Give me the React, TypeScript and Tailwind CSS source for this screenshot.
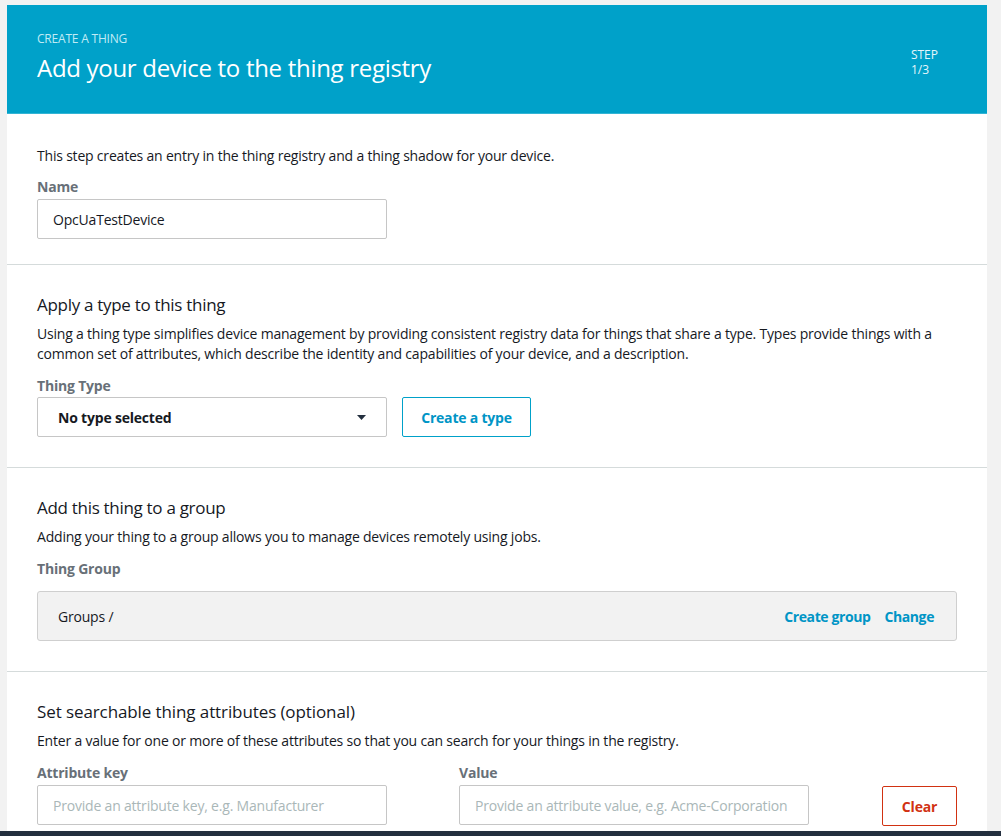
import React from 'react';

const font = { fontFamily: '"Open Sans", "Liberation Sans", sans-serif' };

function Label({ children }: { children: React.ReactNode }) {
  return <div className="text-[14px] leading-[20px] font-bold text-[#687078] tracking-[-0.2px]">{children}</div>;
}

function TextInput({ value, placeholder }: { value?: string; placeholder?: string }) {
  return (
    <div className="w-[350px] h-[40px] border border-[#c6c6c6] rounded-[2px] bg-white flex items-center px-[15px] text-[14px] whitespace-nowrap overflow-hidden tracking-[-0.2px]">
      {value ? (
        <span className="text-[#16191f]">{value}</span>
      ) : (
        <span className="text-[#aab7b8]">{placeholder}</span>
      )}
    </div>
  );
}

export default function App() {
  return (
    <div className="h-[836px] w-full bg-[#f2f2f2] flex flex-col overflow-hidden" style={font}>
      <div className="flex-1 overflow-hidden pt-[5px] pl-[7px] pr-[14px]">
        <div className="bg-white">
          {/* header */}
          <div className="h-[109px] bg-[#00a1c9] border-b border-[#33b4d4] flex justify-between pl-[30px] pr-[49px]">
            <div className="pt-[27px]">
              <div className="text-[12px] leading-[14px] uppercase text-[#c0ebf5] tracking-[-0.2px]">Create a thing</div>
              <div className="text-[24px] leading-[32px] text-white mt-[6px] tracking-[-0.3px]">
                Add your device to the thing registry
              </div>
            </div>
            <div className="pt-[42px] text-[12px] leading-[15px] text-[#e6f6fb]">
              <div>STEP</div>
              <div>1/3</div>
            </div>
          </div>

          {/* name */}
          <div className="px-[30px] pt-[32px] pb-[25px] border-b border-[#d5dbdb] tracking-[-0.2px]">
            <p className="text-[14px] leading-[20px] text-[#16191f]">
              This step creates an entry in the thing registry and a thing shadow for your device.
            </p>
            <div className="mt-[11px]">
              <Label>Name</Label>
            </div>
            <div className="mt-[2px]">
              <TextInput value="OpcUaTestDevice" />
            </div>
          </div>

          {/* type */}
          <div className="px-[30px] pt-[27px] pb-[30px] border-b border-[#d5dbdb] tracking-[-0.2px]">
            <h2 className="text-[17px] leading-[26px] text-[#16191f] tracking-[-0.3px]">Apply a type to this thing</h2>
            <p className="mt-[6px] text-[14px] leading-[20px] text-[#16191f]">
              Using a thing type simplifies device management by providing consistent registry data for things that
              share a type. Types provide things with a common set of attributes, which describe the identity and
              capabilities of your device, and a description.
            </p>
            <div className="mt-[12px]">
              <Label>Thing Type</Label>
            </div>
            <div className="mt-[1px] flex gap-[15px]">
              <div className="w-[350px] h-[40px] border border-[#c6c6c6] rounded-[2px] flex items-center justify-between pl-[20px] pr-[20px]">
                <span className="text-[14px] font-bold text-[#16191f]">No type selected</span>
                <svg width="9" height="5" viewBox="0 0 9 5">
                  <path d="M0 0h9L4.5 5z" fill="#232f3e" />
                </svg>
              </div>
              <button className="h-[40px] w-[129px] border border-[#00a1c9] rounded-[2px] text-[14px] font-bold text-[#0095c6] bg-white tracking-[-0.2px]">
                Create a type
              </button>
            </div>
          </div>

          {/* group */}
          <div className="px-[30px] pt-[27px] pb-[30px] border-b border-[#d5dbdb] tracking-[-0.2px]">
            <h2 className="text-[17px] leading-[26px] text-[#16191f] tracking-[-0.3px]">Add this thing to a group</h2>
            <p className="mt-[6px] text-[14px] leading-[20px] text-[#16191f]">
              Adding your thing to a group allows you to manage devices remotely using jobs.
            </p>
            <div className="mt-[12px]">
              <Label>Thing Group</Label>
            </div>
            <div className="mt-[12px] h-[50px] bg-[#f2f2f2] border border-[#cfcfcf] rounded-[3px] flex items-center justify-between pl-[20px] pr-[22px]">
              <span className="text-[14px] text-[#16191f]">Groups /</span>
              <div className="flex gap-[14px] text-[14px] font-bold text-[#0095c6] tracking-[-0.4px]">
                <span>Create group</span>
                <span>Change</span>
              </div>
            </div>
          </div>

          {/* attributes */}
          <div className="px-[30px] pt-[27px] pb-[30px] tracking-[-0.2px]">
            <h2 className="text-[17px] leading-[26px] text-[#16191f] tracking-[-0.1px]">
              Set searchable thing attributes (optional)
            </h2>
            <p className="mt-[6px] text-[14px] leading-[20px] text-[#16191f]">
              Enter a value for one or more of these attributes so that you can search for your things in the registry.
            </p>
            <div className="mt-[12px] flex items-end">
              <div>
                <Label>Attribute key</Label>
                <div className="mt-[2px]">
                  <TextInput placeholder="Provide an attribute key, e.g. Manufacturer" />
                </div>
              </div>
              <div className="ml-[72px]">
                <Label>Value</Label>
                <div className="mt-[2px]">
                  <TextInput placeholder="Provide an attribute value, e.g. Acme-Corporation" />
                </div>
              </div>
              <button className="ml-[73px] mb-[-1px] h-[40px] w-[76px] border border-[#d13212] rounded-[2px] text-[14px] font-bold text-[#d13212] bg-white">
                Clear
              </button>
            </div>
          </div>
        </div>
      </div>
      <div className="h-[5px] bg-[#232f3e]" />
    </div>
  );
}
